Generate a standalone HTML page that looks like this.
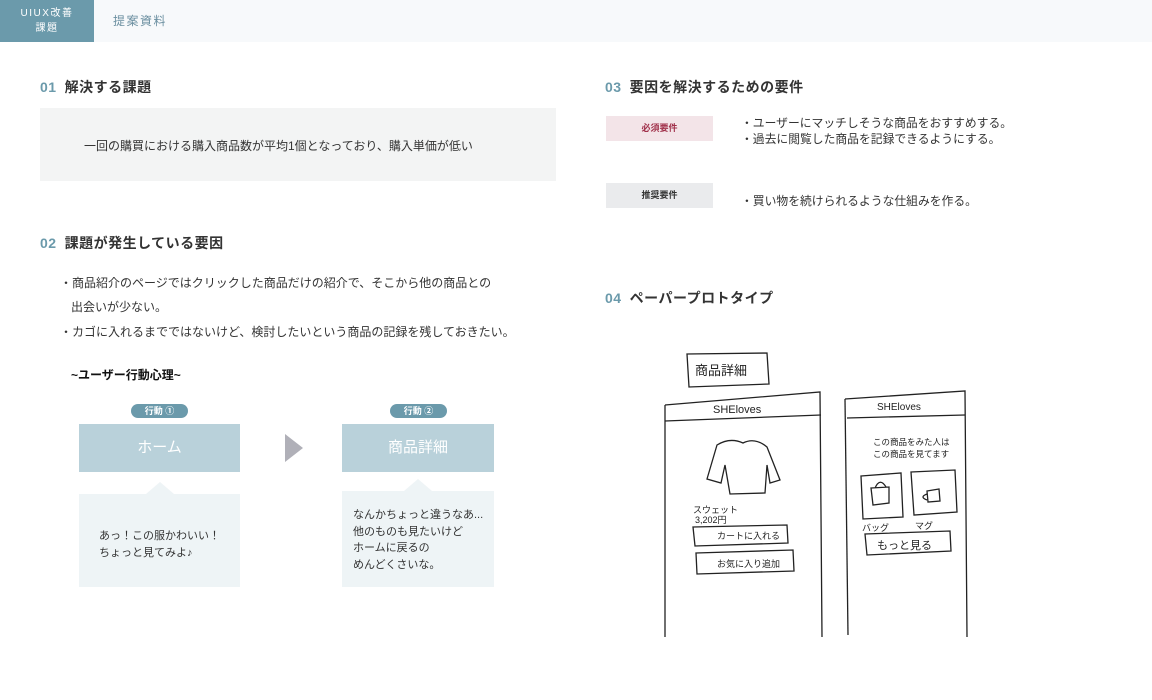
<!DOCTYPE html>
<html><head><meta charset="utf-8"><style>
*{margin:0;padding:0;box-sizing:border-box}
body{width:1152px;height:700px;background:#fff;position:relative;overflow:hidden;font-family:"Liberation Sans","Noto Sans CJK JP",sans-serif;color:#333}
.a{position:absolute;white-space:nowrap}
.h{font-size:14px;font-weight:bold;color:#333;letter-spacing:.5px}
.h b{color:#6b9aab;margin-right:8px}
.t{font-size:12px;color:#333}
.pill{position:absolute;background:#6b9aab;color:#fff;font-size:9px;font-weight:bold;border-radius:8px;text-align:center;line-height:14px;height:14px}
.box{position:absolute;background:#b9d1da;color:#fff;font-size:15px;text-align:center;line-height:48px;height:48px}
.bub{position:absolute;background:#eef4f6;font-size:11px;line-height:16.5px;color:#333}
.bub:before{content:"";position:absolute;top:-12px;left:50%;margin-left:-14px;border:14px solid transparent;border-top:0;border-bottom:12px solid #eef4f6}
.tag{position:absolute;width:107px;height:25px;line-height:25px;text-align:center;font-size:9px;font-weight:bold}
</style></head><body>
<div class="a" style="left:0;top:0;width:1152px;height:42px;background:#f7f9fb"></div>
<div class="a" style="left:0;top:0;width:94px;height:42px;background:#6b9aab;color:#fff;font-size:10px;text-align:center;line-height:15px;padding-top:6px;letter-spacing:1.5px">UIUX改善<br>課題</div>
<div class="a" style="left:113px;top:12px;font-size:12px;color:#6b8fa0;letter-spacing:1.5px">提案資料</div>

<div class="a h" style="left:40px;top:77px"><b>01</b>解決する課題</div>
<div class="a" style="left:40px;top:108px;width:516px;height:73px;background:#f3f4f4"></div>
<div class="a t" style="left:84px;top:137px">一回の購買における購入商品数が平均1個となっており、購入単価が低い</div>

<div class="a h" style="left:40px;top:233px"><b>02</b>課題が発生している要因</div>
<div class="a t" style="left:60px;top:274px">・商品紹介のページではクリックした商品だけの紹介で、そこから他の商品との</div>
<div class="a t" style="left:71px;top:298px">出会いが少ない。</div>
<div class="a t" style="left:60px;top:323px">・カゴに入れるまでではないけど、検討したいという商品の記録を残しておきたい。</div>

<div class="a" style="left:71px;top:366px;font-size:12px;font-weight:bold;color:#111">~ユーザー行動心理~</div>
<div class="pill" style="left:131px;top:404px;width:57px">行動 ①</div>
<div class="pill" style="left:390px;top:404px;width:57px">行動 ②</div>
<div class="box" style="left:79px;top:424px;width:161px">ホーム</div>
<div class="box" style="left:342px;top:424px;width:152px">商品詳細</div>
<div class="a" style="left:285px;top:434px;width:0;height:0;border-top:14px solid transparent;border-bottom:14px solid transparent;border-left:18px solid #b0b0b8"></div>
<div class="bub" style="left:79px;top:494px;width:161px;height:93px;padding:34px 0 0 20px">あっ！この服かわいい！<br>ちょっと見てみよ♪</div>
<div class="bub" style="left:342px;top:491px;width:152px;height:96px;padding:16px 0 0 11px">なんかちょっと違うなあ...<br>他のものも見たいけど<br>ホームに戻るの<br>めんどくさいな。</div>

<div class="a h" style="left:605px;top:77px"><b>03</b>要因を解決するための要件</div>
<div class="tag" style="left:606px;top:116px;background:#f3e4e8;color:#a0304a">必須要件</div>
<div class="a t" style="left:741px;top:116px;font-size:11.8px;line-height:15.5px">・ユーザーにマッチしそうな商品をおすすめする。<br>・過去に閲覧した商品を記録できるようにする。</div>
<div class="tag" style="left:606px;top:183px;background:#eaebed;color:#333">推奨要件</div>
<div class="a t" style="left:741px;top:192px;font-size:11.8px">・買い物を続けられるような仕組みを作る。</div>

<div class="a h" style="left:605px;top:288px"><b>04</b>ペーパープロトタイプ</div>

<svg class="a" style="left:655px;top:345px" width="330" height="300" viewBox="0 0 330 300" fill="none" stroke="#222" stroke-width="1.3" font-family="Liberation Sans, Noto Sans CJK JP, sans-serif">
<path d="M32 9 L112 8 L114 39 L34 42 Z"/>
<path d="M10 60 L165 47 L167 292"/>
<path d="M10 60 L10 292"/>
<path d="M10 76 L166 70"/>
<path d="M62 100 Q75 92 88 98 Q100 92 112 102 L125 135 L115 138 L112 120 L110 148 L75 149 L70 120 L66 138 L52 134 Z"/>
<path d="M38 182 L132 180 L133 198 L40 201 Z"/>
<path d="M41 208 L138 205 L139 226 L42 229 Z"/>
<path d="M190 54 L310 46 L312 292"/>
<path d="M190 54 L193 290"/>
<path d="M192 73 L310 70"/>
<path d="M206 131 L246 128 L248 172 L208 174 Z"/>
<path d="M256 127 L300 125 L302 167 L259 170 Z"/>
<path d="M216 143 L234 142 L234 158 L218 160 Z M220 143 Q225 132 231 142"/>
<path d="M272 146 L284 144 L285 156 L273 157 Z M272 149 Q264 152 272 155"/>
<path d="M210 189 L295 186 L296 206 L212 210 Z"/>
<g stroke="none" fill="#222" font-size="11">
<text x="40" y="30" font-size="13">商品詳細</text>
<text x="58" y="68" font-size="11">SHEloves</text>
<text x="38" y="168" font-size="9">スウェット</text>
<text x="40" y="178" font-size="9">3,202円</text>
<text x="62" y="194" font-size="9">カートに入れる</text>
<text x="62" y="222" font-size="9">お気に入り追加</text>
<text x="222" y="65" font-size="10">SHEloves</text>
<text x="218" y="100" font-size="8.5">この商品をみた人は</text>
<text x="218" y="112" font-size="8.5">この商品を見てます</text>
<text x="207" y="186" font-size="9">バッグ</text>
<text x="260" y="184" font-size="9">マグ</text>
<text x="222" y="204" font-size="11">もっと見る</text>
</g>
</svg>
</body></html>
